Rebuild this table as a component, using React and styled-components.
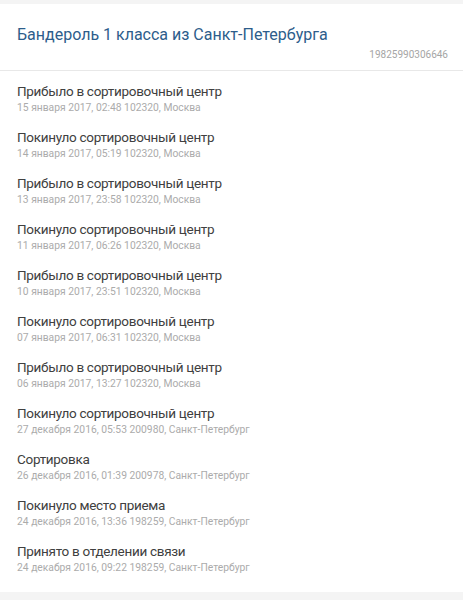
import React from 'react';
import styled, { createGlobalStyle } from 'styled-components';

const GlobalStyle = createGlobalStyle`
  html, body {
    margin: 0;
    padding: 0;
    background: #f4f4f4;
    font-family: Roboto, "Noto Sans", sans-serif;
  }
`;

const Page = styled.div`
  padding: 4px 0 8px;
`;

const Card = styled.div`
  background: #ffffff;
  height: 588px;
`;

const Header = styled.div`
  padding: 21px 15px 0 17px;
  border-bottom: 1px solid #e8e8e8;
  box-sizing: border-box;
  height: 67px;
`;

const Title = styled.div`
  font-size: 16px;
  line-height: 20px;
  color: #2d5d8b;
`;

const Barcode = styled.div`
  margin-top: 3px;
  text-align: right;
  font-size: 10px;
  line-height: 14px;
  color: #a5a5a5;
`;

const List = styled.ul`
  list-style: none;
  margin: 0;
  padding: 12px 17px 0;
`;

const Item = styled.li`
  height: 46px;
`;

const Status = styled.div`
  font-size: 13.5px;
  letter-spacing: -0.3px;
  line-height: 17px;
  color: #404040;
`;

const Meta = styled.div`
  font-size: 10.3px;
  line-height: 15px;
  color: #ababab;
`;

const events = [
  ['Прибыло в сортировочный центр', '15 января 2017, 02:48 102320, Москва'],
  ['Покинуло сортировочный центр', '14 января 2017, 05:19 102320, Москва'],
  ['Прибыло в сортировочный центр', '13 января 2017, 23:58 102320, Москва'],
  ['Покинуло сортировочный центр', '11 января 2017, 06:26 102320, Москва'],
  ['Прибыло в сортировочный центр', '10 января 2017, 23:51 102320, Москва'],
  ['Покинуло сортировочный центр', '07 января 2017, 06:31 102320, Москва'],
  ['Прибыло в сортировочный центр', '06 января 2017, 13:27 102320, Москва'],
  ['Покинуло сортировочный центр', '27 декабря 2016, 05:53 200980, Санкт-Петербург'],
  ['Сортировка', '26 декабря 2016, 01:39 200978, Санкт-Петербург'],
  ['Покинуло место приема', '24 декабря 2016, 13:36 198259, Санкт-Петербург'],
  ['Принято в отделении связи', '24 декабря 2016, 09:22 198259, Санкт-Петербург'],
];

export default function App() {
  return (
    <Page>
      <GlobalStyle />
      <Card>
        <Header>
          <Title>Бандероль 1 класса из Санкт-Петербурга</Title>
          <Barcode>19825990306646</Barcode>
        </Header>
        <List>
          {events.map(([status, meta], i) => (
            <Item key={i}>
              <Status>{status}</Status>
              <Meta>{meta}</Meta>
            </Item>
          ))}
        </List>
      </Card>
    </Page>
  );
}
